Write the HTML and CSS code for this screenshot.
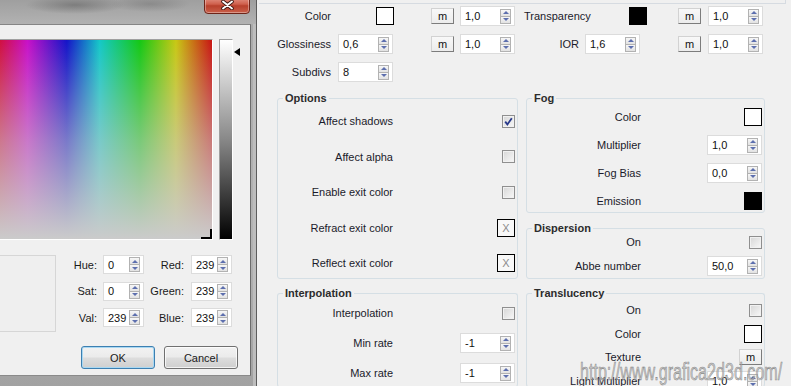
FILE: index.html
```html
<!DOCTYPE html>
<html lang="en">
<head>
  <meta charset="UTF-8">
  <meta name="viewport" content="width=device-width, initial-scale=1.0">
  <title>Material Parameters</title>
  <link rel="stylesheet" href="styles.css">
</head>
<body>
  <!-- colour picker window -->
  <div class="dialog">
    <div class="titlebar">
      <button class="close-btn" title="Close">
        <svg width="13" height="10" viewBox="0 0 13 10">
          <path d="M2 1.5 L11 8.5 M11 1.5 L2 8.5" stroke="#3a1610" stroke-width="3.6" stroke-linecap="round" fill="none"/>
          <path d="M2 1.5 L11 8.5 M11 1.5 L2 8.5" stroke="#fff" stroke-width="1.9" stroke-linecap="round" fill="none"/>
        </svg>
      </button>
    </div>
    <div class="client">
      <div class="picker">
        <div class="spectrum"><span class="cross"></span></div>
        <div class="lum-bar"></div>
        <div class="lum-arrow"></div>
      </div>
      <div class="color-values">
        <div class="preview"></div>
        <div class="value-grid">
          <label class="v-label">Hue:</label>
          <div class="spin small"><span class="spin-text">0</span><span class="arrows"><span class="up"></span><span class="down"></span></span></div>
          <label class="v-label wide">Red:</label>
          <div class="spin small"><span class="spin-text">239</span><span class="arrows"><span class="up"></span><span class="down"></span></span></div>

          <label class="v-label">Sat:</label>
          <div class="spin small"><span class="spin-text">0</span><span class="arrows"><span class="up"></span><span class="down"></span></span></div>
          <label class="v-label wide">Green:</label>
          <div class="spin small"><span class="spin-text">239</span><span class="arrows"><span class="up"></span><span class="down"></span></span></div>

          <label class="v-label">Val:</label>
          <div class="spin small"><span class="spin-text">239</span><span class="arrows"><span class="up"></span><span class="down"></span></span></div>
          <label class="v-label wide">Blue:</label>
          <div class="spin small"><span class="spin-text">239</span><span class="arrows"><span class="up"></span><span class="down"></span></span></div>
        </div>
      </div>
      <div class="dlg-buttons">
        <button class="dlg-btn default">OK</button>
        <button class="dlg-btn">Cancel</button>
      </div>
    </div>
  </div>

  <!-- material rollout -->
  <div class="panel">
    <div class="rollout-edge"></div>

    <div class="params">
      <div class="param-row">
        <span class="p-label">Color</span>
        <div class="p-cell"><span class="swatch white"></span></div>
        <button class="m-btn">m</button>
        <div class="spin"><span class="spin-text">1,0</span><span class="arrows"><span class="up"></span><span class="down"></span></span></div>
        <span class="p-label2 left">Transparency</span>
        <div class="p-cell2"><span class="swatch black"></span></div>
        <button class="m-btn">m</button>
        <div class="spin last"><span class="spin-text">1,0</span><span class="arrows"><span class="up"></span><span class="down"></span></span></div>
      </div>
      <div class="param-row">
        <span class="p-label">Glossiness</span>
        <div class="p-cell"><div class="spin"><span class="spin-text">0,6</span><span class="arrows"><span class="up"></span><span class="down"></span></span></div></div>
        <button class="m-btn">m</button>
        <div class="spin"><span class="spin-text">1,0</span><span class="arrows"><span class="up"></span><span class="down"></span></span></div>
        <span class="p-label2">IOR</span>
        <div class="p-cell2"><div class="spin"><span class="spin-text">1,6</span><span class="arrows"><span class="up"></span><span class="down"></span></span></div></div>
        <button class="m-btn">m</button>
        <div class="spin last"><span class="spin-text">1,0</span><span class="arrows"><span class="up"></span><span class="down"></span></span></div>
      </div>
      <div class="param-row">
        <span class="p-label">Subdivs</span>
        <div class="p-cell"><div class="spin"><span class="spin-text">8</span><span class="arrows"><span class="up"></span><span class="down"></span></span></div></div>
      </div>
    </div>

    <div class="groups">
      <div class="group-col left-col">
        <div class="group options">
          <div class="group-title">Options</div>
          <div class="rows">
            <div class="row"><span class="row-label">Affect shadows</span>
              <span class="check">
                <svg width="11" height="11" viewBox="0 0 11 11"><path d="M2.2 5.6 L4.4 8.4 L8.8 2.2" stroke="#28398a" stroke-width="1.8" fill="none"/></svg>
              </span>
            </div>
            <div class="row"><span class="row-label">Affect alpha</span><span class="check"></span></div>
            <div class="row"><span class="row-label">Enable exit color</span><span class="check"></span></div>
            <div class="row"><span class="row-label">Refract exit color</span><span class="swatch none">X</span></div>
            <div class="row"><span class="row-label">Reflect exit color</span><span class="swatch none">X</span></div>
          </div>
        </div>
        <div class="group interpolation">
          <div class="group-title">Interpolation</div>
          <div class="rows">
            <div class="row"><span class="row-label">Interpolation</span><span class="check"></span></div>
            <div class="row"><span class="row-label">Min rate</span>
              <div class="spin"><span class="spin-text">-1</span><span class="arrows"><span class="up"></span><span class="down"></span></span></div>
            </div>
            <div class="row"><span class="row-label">Max rate</span>
              <div class="spin"><span class="spin-text">-1</span><span class="arrows"><span class="up"></span><span class="down"></span></span></div>
            </div>
          </div>
        </div>
      </div>

      <div class="group-col right-col">
        <div class="group fog">
          <div class="group-title">Fog</div>
          <div class="rows">
            <div class="row"><span class="row-label">Color</span><span class="swatch white"></span></div>
            <div class="row"><span class="row-label">Multiplier</span>
              <div class="spin"><span class="spin-text">1,0</span><span class="arrows"><span class="up"></span><span class="down"></span></span></div>
            </div>
            <div class="row"><span class="row-label">Fog Bias</span>
              <div class="spin"><span class="spin-text">0,0</span><span class="arrows"><span class="up"></span><span class="down"></span></span></div>
            </div>
            <div class="row"><span class="row-label">Emission</span><span class="swatch black"></span></div>
          </div>
        </div>
        <div class="group dispersion">
          <div class="group-title">Dispersion</div>
          <div class="rows">
            <div class="row"><span class="row-label">On</span><span class="check"></span></div>
            <div class="row"><span class="row-label">Abbe number</span>
              <div class="spin"><span class="spin-text">50,0</span><span class="arrows"><span class="up"></span><span class="down"></span></span></div>
            </div>
          </div>
        </div>
        <div class="group translucency">
          <div class="group-title">Translucency</div>
          <div class="rows">
            <div class="row"><span class="row-label">On</span><span class="check"></span></div>
            <div class="row"><span class="row-label">Color</span><span class="swatch white"></span></div>
            <div class="row"><span class="row-label">Texture</span><button class="m-btn">m</button></div>
            <div class="row"><span class="row-label">Light Multiplier</span>
              <div class="spin"><span class="spin-text">1,0</span><span class="arrows"><span class="up"></span><span class="down"></span></span></div>
            </div>
          </div>
        </div>
      </div>
    </div>
  </div>

  <div class="watermark">http://www.grafica2d3d.com/</div>
</body>
</html>
```

FILE: styles.css
```css
* {
  box-sizing: border-box;
}

body {
  margin: 0;
  width: 791px;
  height: 386px;
  overflow: hidden;
  position: relative;
  display: flex;
  background: #f0f0f0;
  font-family: "Liberation Sans", Arial, sans-serif;
  font-size: 11px;
  color: #1b1b2b;
}

button {
  font: inherit;
  color: inherit;
  padding: 0;
}

/* ---------- colour picker window ---------- */

.dialog {
  width: 257px;
  height: 386px;
  flex-shrink: 0;
  display: flex;
  flex-direction: column;
  background: linear-gradient(180deg, #a9a9a9 0%, #b3b3b3 60%, #a2a2a2 100%);
  border-right: 1px solid #5c5c5c;
  box-shadow: inset -3px 0 0 #bdbdbd;
}

.titlebar {
  height: 24px;
  flex-shrink: 0;
  display: flex;
  justify-content: flex-end;
  padding-right: 6px;
  background:
    radial-gradient(ellipse 50px 9px at 75px 5px, rgba(80, 80, 80, .45), transparent),
    radial-gradient(ellipse 40px 8px at 150px 4px, rgba(95, 95, 95, .35), transparent),
    linear-gradient(180deg, #9f9f9f, #b2b2b2);
}

.close-btn {
  width: 46px;
  height: 18px;
  margin-top: -4px;
  display: flex;
  align-items: center;
  justify-content: center;
  border: 1px solid #6e2418;
  border-radius: 0 0 4px 4px;
  background: linear-gradient(180deg, #e59a8c 0%, #cf5f4c 45%, #b8402c 55%, #c9604a 100%);
  box-shadow: inset 0 0 0 1px rgba(255, 255, 255, .35);
}

.client {
  width: 251px;
  height: 352px;
  flex-shrink: 0;
  background: #f0f0f0;
  border-top: 1px solid #858585;
  border-right: 1px solid #6c6c6c;
  border-bottom: 1px solid #8a8a8a;
}

.picker {
  display: flex;
  align-items: flex-start;
  margin-top: 14px;
}

.spectrum {
  position: relative;
  width: 213px;
  height: 201px;
  border-top: 1px solid #a0a0a0;
  border-right: 1px solid #fff;
  border-bottom: 1px solid #fff;
  background:
    linear-gradient(180deg, rgba(203, 203, 203, 0) 0%, rgba(203, 203, 203, .55) 50%, #cbcbcb 100%),
    linear-gradient(90deg, #d01040 0%, #c810c8 13%, #1414c8 31.5%, #14c8c8 47%, #14c814 66%, #c8c814 83%, #c81414 100%);
}

/* selection marker, sits in the grey corner */
.cross {
  position: absolute;
  right: 0;
  bottom: 0;
  width: 11px;
  height: 10px;
  border-right: 2px solid #000;
  border-bottom: 2px solid #000;
}

.lum-bar {
  width: 14px;
  height: 201px;
  margin-left: 6px;
  border-top: 1px solid #a0a0a0;
  border-left: 1px solid #a0a0a0;
  border-right: 1px solid #fff;
  border-bottom: 1px solid #fff;
  background: linear-gradient(180deg, #fff 0%, #888 50%, #000 100%);
}

.lum-arrow {
  width: 0;
  height: 0;
  margin-top: 9px;
  margin-left: 1px;
  border-top: 4.5px solid transparent;
  border-bottom: 4.5px solid transparent;
  border-right: 6px solid #000;
}

.color-values {
  display: flex;
  margin-top: 15px;
}

.preview {
  width: 56px;
  height: 77px;
  border: 1px solid #d6d6d6;
  border-left: none;
  background: #efefef;
}

.value-grid {
  display: grid;
  grid-template-columns: 47px 41px 47px 41px;
  grid-auto-rows: 19px;
  row-gap: 7.5px;
}

.v-label {
  display: flex;
  align-items: center;
  justify-content: flex-end;
  padding-right: 6px;
  color: #1a1a1a;
}

.v-label.wide {
  padding-right: 7px;
}

.dlg-buttons {
  display: flex;
  justify-content: flex-end;
  gap: 9px;
  margin-top: 14px;
  padding-right: 12px;
}

.dlg-btn {
  width: 74px;
  height: 23px;
  border: 1px solid #707070;
  border-radius: 3px;
  color: #1a1a1a;
  background: linear-gradient(180deg, #f2f2f2 0%, #ebebeb 48%, #dddddd 52%, #cfcfcf 100%);
  box-shadow: inset 0 0 0 1px rgba(255, 255, 255, .75);
}

.dlg-btn.default {
  border-color: #3c7fb1;
  box-shadow: inset 0 0 0 1px #a9d8f2;
}

/* ---------- spinner fields ---------- */

.spin {
  width: 55px;
  height: 20px;
  flex-shrink: 0;
  display: flex;
  align-items: center;
  background: #fff;
  border: 1px solid #dcdcdc;
}

.spin.small {
  width: 41px;
  height: 19px;
}

.spin-text {
  flex: 1;
  padding-left: 4px;
  color: #101010;
}

.arrows {
  display: flex;
  flex-direction: column;
  margin-right: 3px;
}

.arrows span {
  width: 11px;
  height: 8px;
  display: flex;
  align-items: center;
  justify-content: center;
  border: 1px solid #b2b2b2;
  background: linear-gradient(180deg, #f7f7f7, #e2e2e2);
}

.arrows .down {
  border-top: none;
  height: 7px;
}

.arrows .up::after,
.arrows .down::after {
  content: "";
  border-left: 3px solid transparent;
  border-right: 3px solid transparent;
}

.arrows .up::after {
  border-bottom: 3px solid #5d6fae;
}

.arrows .down::after {
  border-top: 3px solid #5d6fae;
}

/* ---------- material rollout ---------- */

.panel {
  flex: 1;
  min-width: 0;
  height: 386px;
  overflow: hidden;
}

.rollout-edge {
  width: 527px;
  height: 4px;
  margin-left: 2px;
  border-bottom: 1px solid #d6dbe1;
  border-right: 1px solid #d6dbe1;
}

.params {
  display: flex;
  flex-direction: column;
  gap: 8px;
  padding-top: 2px;
}

.param-row {
  display: flex;
  align-items: center;
  height: 20px;
  white-space: nowrap;
}

.p-label {
  width: 74px;
  text-align: right;
}

.p-cell {
  width: 55px;
  margin-left: 7px;
  display: flex;
}

.p-cell .swatch {
  margin-left: 38px;
}

.param-row > .m-btn {
  margin-left: 38px;
}

.param-row > .spin {
  margin-left: 6px;
}

.param-row > .spin.last {
  margin-left: 7px;
}

.p-label2 {
  width: 55px;
  margin-left: 9px;
  text-align: right;
}

.p-label2.left {
  text-align: left;
  margin-right: -10px;
  width: 65px;
}

.p-cell2 {
  width: 55px;
  margin-left: 6px;
  display: flex;
}

.p-cell2 .swatch {
  margin-left: 44px;
}

.m-btn {
  width: 23px;
  height: 16px;
  flex-shrink: 0;
  line-height: 13px;
  text-align: center;
  color: #111;
  background: linear-gradient(180deg, #f8f8f8, #ececec);
  border: 1px solid #d2d2d2;
  border-right-color: #7c7c7c;
  border-bottom-color: #7c7c7c;
}

.swatch {
  width: 18px;
  height: 18px;
  flex-shrink: 0;
  border: 1px solid #000;
}

.swatch.white {
  background: #fff;
}

.swatch.black {
  background: #000;
}

.swatch.none {
  background: #f8f8f8;
  color: #8c8c8c;
  text-align: center;
  line-height: 16px;
}

.check {
  width: 13px;
  height: 13px;
  flex-shrink: 0;
  display: flex;
  align-items: center;
  justify-content: center;
  border: 1px solid #8f8f8f;
  background: linear-gradient(135deg, #d6d6d6, #f8f8f8);
  box-shadow: inset 0 0 0 1px #f1f1f1;
}

/* ---------- group boxes ---------- */

.groups {
  display: flex;
  gap: 8px;
  margin-top: 16px;
  padding-left: 20px;
}

.group-col {
  display: flex;
  flex-direction: column;
  gap: 14px;
}

.left-col {
  width: 241px;
}

.right-col {
  width: 239px;
}

.group {
  border: 1px solid #d5dfe5;
  border-radius: 3px;
  padding-right: 2px;
  flex-shrink: 0;
}

.group-title {
  display: table;
  margin: -7px 0 -6px 5px;
  padding: 0 2px;
  line-height: 13px;
  font-weight: bold;
  color: #2c2c2c;
  background: #f0f0f0;
}

.rows {
  display: flex;
  flex-direction: column;
}

.row {
  display: flex;
  align-items: center;
  justify-content: space-between;
  height: 20px;
  flex-shrink: 0;
  white-space: nowrap;
}

.row-label {
  width: 115px;
  text-align: right;
}

.right-col .row-label {
  width: 114px;
}

.options {
  height: 181px;
}

.options .rows {
  padding-top: 12px;
  gap: 15.5px;
}

/* the last two boxes run on below the window edge */
.interpolation,
.translucency {
  height: 94px;
  border-bottom-color: transparent;
}

.interpolation .rows {
  padding-top: 9px;
  gap: 10px;
}

.fog {
  height: 115px;
}

.fog .rows {
  padding-top: 8px;
  gap: 8px;
}

.dispersion {
  height: 51px;
  margin-top: 1px;
}

.dispersion .rows {
  padding-top: 3px;
  gap: 4px;
}

.translucency .rows {
  padding-top: 6px;
  gap: 3.7px;
}

/* site stamp over the corner */
.watermark {
  position: absolute;
  left: 580px;
  top: 359px;
  font-size: 23px;
  white-space: nowrap;
  transform: scaleX(.7);
  transform-origin: 0 0;
  color: rgba(185, 185, 185, .7);
  -webkit-text-stroke: .6px rgba(105, 105, 105, .75);
}
```
